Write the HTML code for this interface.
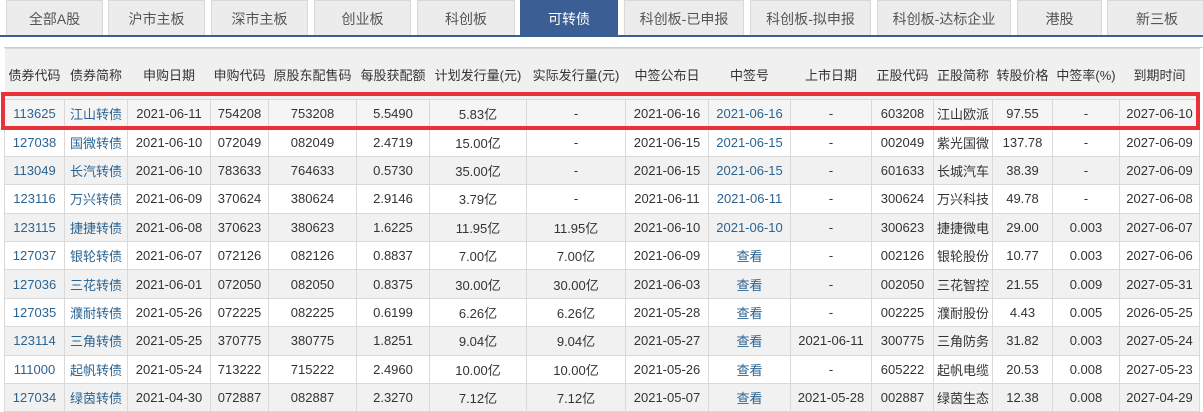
<!DOCTYPE html>
<html><head><meta charset="utf-8"><style>
body{margin:0;width:1203px;height:411px;overflow:hidden;background:#fff;font-family:"Liberation Sans","Noto Sans CJK SC",sans-serif;font-size:13px;color:#333;position:relative}
.tabs{position:absolute;left:0;top:0;width:1203px;height:35px;border-bottom:2px solid #3b5f94}
.tab{position:absolute;top:0;height:35px;line-height:36px;text-align:center;background:#ececec;border:1px solid #d8d8d8;border-bottom:none;box-sizing:border-box;color:#555;font-size:14px}
.tab.on{background:#3b5f94;color:#fff;border-color:#3b5f94}
.wrap{position:absolute;left:4px;top:47px;width:1199px;border-top:1px solid #ccc}
table{border-collapse:collapse;table-layout:fixed;width:1195px}
td,th{border:1px solid #d9d9d9;text-align:center;white-space:nowrap;overflow:hidden;padding:0;height:27.4px;font-weight:normal}
th{height:50px;background:#f0f0f0;color:#333;border-left:none;border-right:none}
tr:nth-child(even) td{background:#f1f1f1}
tr.r1 td{background:#f5f5f5}
a{color:#2b6391;text-decoration:none}
.red{position:absolute;left:1px;top:92px;width:1191px;height:30px;border:4px solid #e8323a}
</style></head><body>
<div class="tabs">
<div class="tab" style="left:6px;width:97px">全部A股</div>
<div class="tab" style="left:108px;width:97px">沪市主板</div>
<div class="tab" style="left:211px;width:97px">深市主板</div>
<div class="tab" style="left:314px;width:97px">创业板</div>
<div class="tab" style="left:417px;width:98px">科创板</div>
<div class="tab on" style="left:520px;width:98px">可转债</div>
<div class="tab" style="left:624px;width:120px">科创板-已申报</div>
<div class="tab" style="left:750px;width:121px">科创板-拟申报</div>
<div class="tab" style="left:877px;width:134px">科创板-达标企业</div>
<div class="tab" style="left:1017px;width:85px">港股</div>
<div class="tab" style="left:1107px;width:100px">新三板</div>
</div>
<div class="wrap"><table>
<colgroup><col style="width:60px"><col style="width:63px"><col style="width:83px"><col style="width:58px"><col style="width:88px"><col style="width:73px"><col style="width:97px"><col style="width:99px"><col style="width:83px"><col style="width:82px"><col style="width:81px"><col style="width:62px"><col style="width:59px"><col style="width:60px"><col style="width:67px"><col style="width:80px"></colgroup>
<tr><th>债券代码</th><th>债券简称</th><th>申购日期</th><th>申购代码</th><th>原股东配售码</th><th>每股获配额</th><th>计划发行量(元)</th><th>实际发行量(元)</th><th>中签公布日</th><th>中签号</th><th>上市日期</th><th>正股代码</th><th>正股简称</th><th>转股价格</th><th>中签率(%)</th><th>到期时间</th></tr>
<tr class="r1"><td><a>113625</a></td><td><a>江山转债</a></td><td>2021-06-11</td><td>754208</td><td>753208</td><td>5.5490</td><td>5.83亿</td><td>-</td><td>2021-06-16</td><td><a>2021-06-16</a></td><td>-</td><td>603208</td><td>江山欧派</td><td>97.55</td><td>-</td><td>2027-06-10</td></tr>
<tr><td><a>127038</a></td><td><a>国微转债</a></td><td>2021-06-10</td><td>072049</td><td>082049</td><td>2.4719</td><td>15.00亿</td><td>-</td><td>2021-06-15</td><td><a>2021-06-15</a></td><td>-</td><td>002049</td><td>紫光国微</td><td>137.78</td><td>-</td><td>2027-06-09</td></tr>
<tr><td><a>113049</a></td><td><a>长汽转债</a></td><td>2021-06-10</td><td>783633</td><td>764633</td><td>0.5730</td><td>35.00亿</td><td>-</td><td>2021-06-15</td><td><a>2021-06-15</a></td><td>-</td><td>601633</td><td>长城汽车</td><td>38.39</td><td>-</td><td>2027-06-09</td></tr>
<tr><td><a>123116</a></td><td><a>万兴转债</a></td><td>2021-06-09</td><td>370624</td><td>380624</td><td>2.9146</td><td>3.79亿</td><td>-</td><td>2021-06-11</td><td><a>2021-06-11</a></td><td>-</td><td>300624</td><td>万兴科技</td><td>49.78</td><td>-</td><td>2027-06-08</td></tr>
<tr><td><a>123115</a></td><td><a>捷捷转债</a></td><td>2021-06-08</td><td>370623</td><td>380623</td><td>1.6225</td><td>11.95亿</td><td>11.95亿</td><td>2021-06-10</td><td><a>2021-06-10</a></td><td>-</td><td>300623</td><td>捷捷微电</td><td>29.00</td><td>0.003</td><td>2027-06-07</td></tr>
<tr><td><a>127037</a></td><td><a>银轮转债</a></td><td>2021-06-07</td><td>072126</td><td>082126</td><td>0.8837</td><td>7.00亿</td><td>7.00亿</td><td>2021-06-09</td><td><a>查看</a></td><td>-</td><td>002126</td><td>银轮股份</td><td>10.77</td><td>0.003</td><td>2027-06-06</td></tr>
<tr><td><a>127036</a></td><td><a>三花转债</a></td><td>2021-06-01</td><td>072050</td><td>082050</td><td>0.8375</td><td>30.00亿</td><td>30.00亿</td><td>2021-06-03</td><td><a>查看</a></td><td>-</td><td>002050</td><td>三花智控</td><td>21.55</td><td>0.009</td><td>2027-05-31</td></tr>
<tr><td><a>127035</a></td><td><a>濮耐转债</a></td><td>2021-05-26</td><td>072225</td><td>082225</td><td>0.6199</td><td>6.26亿</td><td>6.26亿</td><td>2021-05-28</td><td><a>查看</a></td><td>-</td><td>002225</td><td>濮耐股份</td><td>4.43</td><td>0.005</td><td>2026-05-25</td></tr>
<tr><td><a>123114</a></td><td><a>三角转债</a></td><td>2021-05-25</td><td>370775</td><td>380775</td><td>1.8251</td><td>9.04亿</td><td>9.04亿</td><td>2021-05-27</td><td><a>查看</a></td><td>2021-06-11</td><td>300775</td><td>三角防务</td><td>31.82</td><td>0.003</td><td>2027-05-24</td></tr>
<tr><td><a>111000</a></td><td><a>起帆转债</a></td><td>2021-05-24</td><td>713222</td><td>715222</td><td>2.4960</td><td>10.00亿</td><td>10.00亿</td><td>2021-05-26</td><td><a>查看</a></td><td>-</td><td>605222</td><td>起帆电缆</td><td>20.53</td><td>0.008</td><td>2027-05-23</td></tr>
<tr><td><a>127034</a></td><td><a>绿茵转债</a></td><td>2021-04-30</td><td>072887</td><td>082887</td><td>2.3270</td><td>7.12亿</td><td>7.12亿</td><td>2021-05-07</td><td><a>查看</a></td><td>2021-05-28</td><td>002887</td><td>绿茵生态</td><td>12.38</td><td>0.008</td><td>2027-04-29</td></tr>
</table></div>
<div class="red"></div>
</body></html>
